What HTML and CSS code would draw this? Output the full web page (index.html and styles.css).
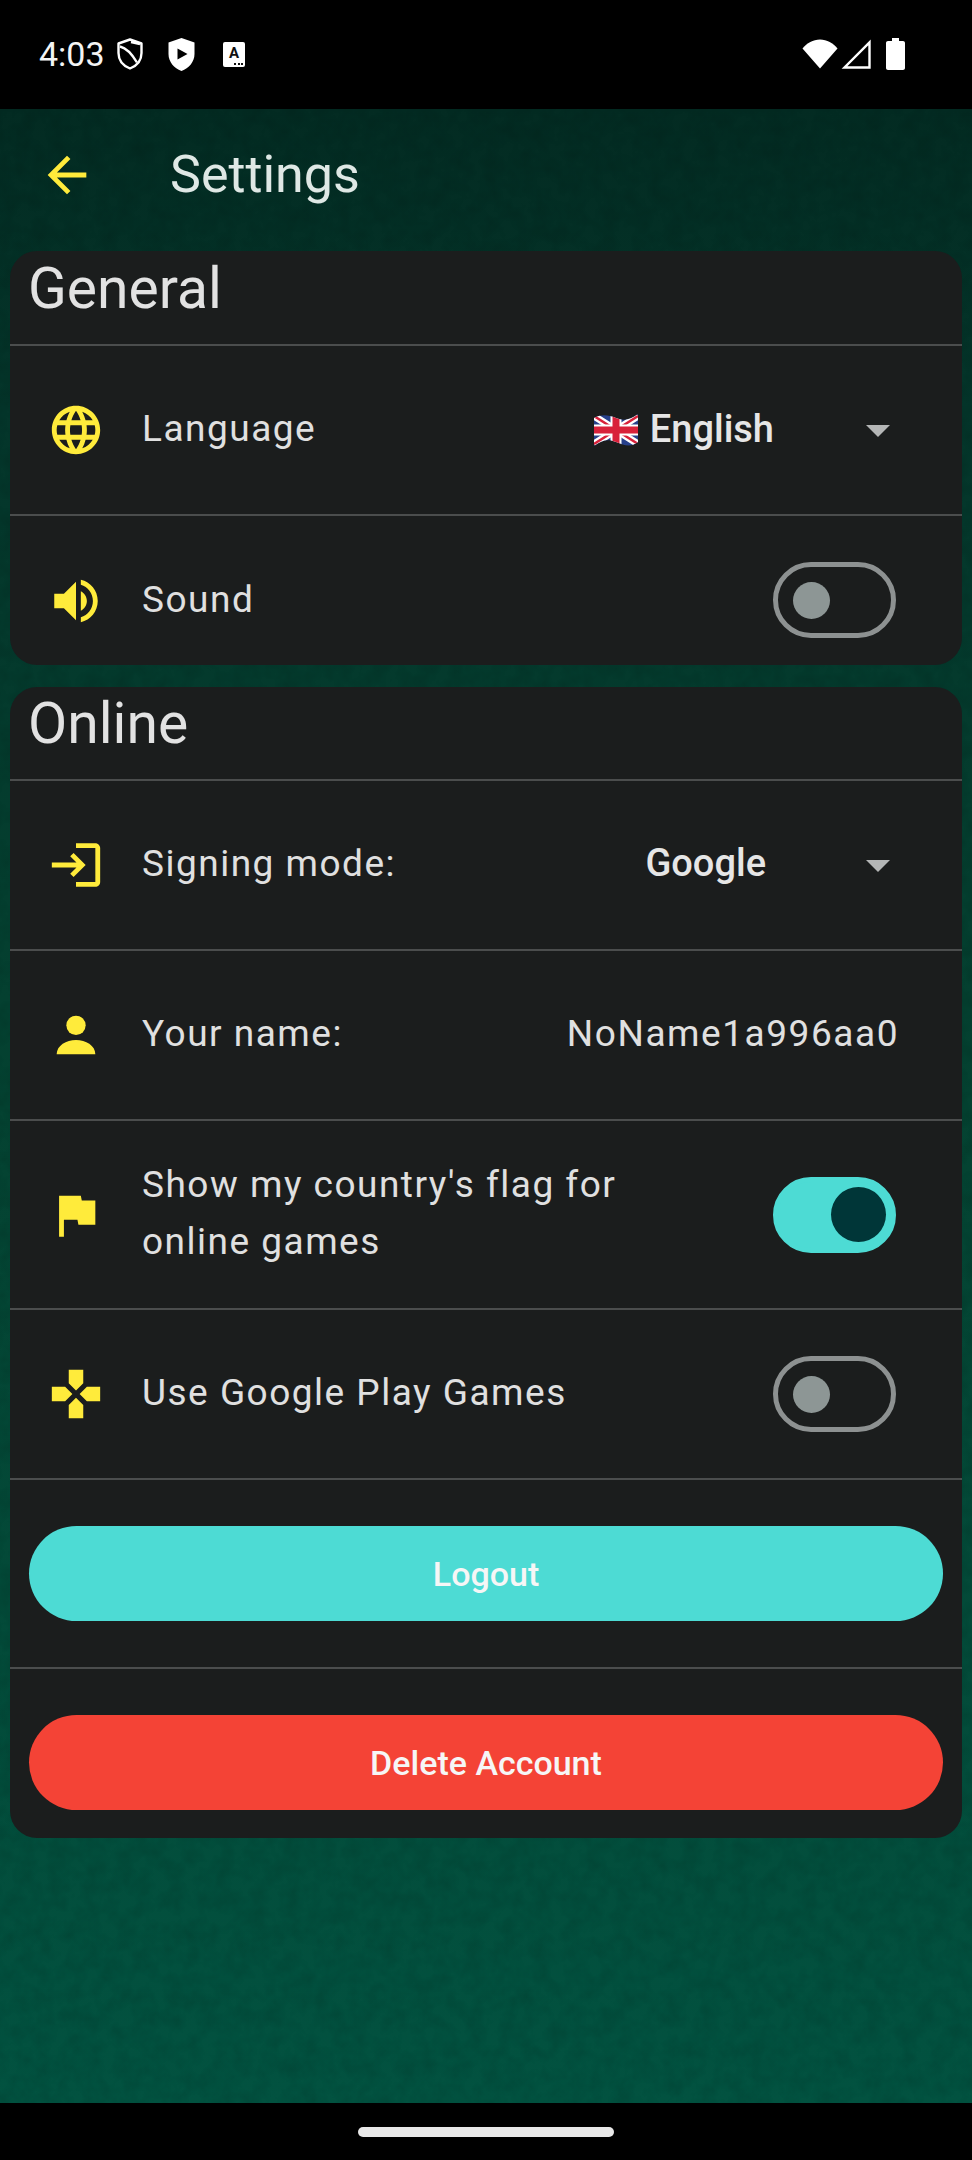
FILE: index.html
```html
<!DOCTYPE html>
<html lang="en">
<head>
<meta charset="utf-8">
<title>Settings</title>
<link rel="stylesheet" href="styles.css">
</head>
<body>
<div class="screen">
  <header class="statusbar">
    <div class="status-left">
      <span class="clock">4:03</span>
      <svg class="st-shield" viewBox="0 0 26 32"><path d="M13 1.500 24.500 5.500V15c0 7.500-4.800 12.800-11.500 15.500C6.300 27.800 1.500 22.500 1.500 15V5.500Z" fill="none" stroke="#fff" stroke-width="2.400" stroke-linejoin="round"/><path d="M3 8.500C9 10 15 16 20 24.500M23 6 14 4" fill="none" stroke="#fff" stroke-width="2.400"/></svg>
      <svg class="st-play" viewBox="0 0 27 33"><path fill-rule="evenodd" fill="#fff" d="M13.500 0 26.500 4.500V16c0 8-5.500 14-13 17C6 30 .5 24 .5 16V4.500ZM9.500 10.500V21.500L19.500 16Z"/></svg>
      <span class="st-tile"><span class="st-tile-a">A</span><span class="st-tile-dots"></span></span>
    </div>
    <div class="status-right">
      <svg class="st-wifi" viewBox="0 0 36 30"><path fill="#fff" d="M18 29.500 .5 9.500C5 4 11 .5 18 .5S31 4 35.500 9.500Z"/></svg>
      <svg class="st-signal" viewBox="0 0 30 30"><path d="M28.500 3.500V28.500H3.500Z" fill="none" stroke="#fff" stroke-width="2.400"/></svg>
      <svg class="st-battery" viewBox="0 0 19 32"><path fill="#fff" d="M6 0h7v3h4c1.100 0 2 .9 2 2v25c0 1.100-.9 2-2 2H2c-1.100 0-2-.9-2-2V5c0-1.100.9-2 2-2h4Z"/></svg>
    </div>
  </header>

  <main class="content">
    <div class="appbar">
      <svg class="icon" viewBox="0 0 24 24"><path d="M20 11H7.830l5.590-5.590L12 4l-8 8 8 8 1.410-1.410L7.830 13H20v-2z"/></svg>
      <h1 class="appbar-title">Settings</h1>
    </div>

    <section class="card">
      <h2 class="card-title card-title-general">General</h2>
      <div class="row">
        <svg class="icon" viewBox="0 0 24 24"><path d="M11.990 2C6.470 2 2 6.480 2 12s4.470 10 9.990 10C17.520 22 22 17.520 22 12S17.520 2 11.990 2zm6.930 6h-2.950c-.32-1.250-.78-2.450-1.380-3.560 1.840.63 3.370 1.910 4.330 3.560zM12 4.040c.83 1.200 1.480 2.530 1.910 3.960h-3.820c.43-1.430 1.080-2.760 1.910-3.960zM4.260 14C4.100 13.360 4 12.690 4 12s.1-1.360.26-2h3.380c-.08.66-.14 1.320-.14 2 0 .68.06 1.340.14 2H4.260zm.82 2h2.950c.32 1.250.78 2.450 1.380 3.560-1.840-.63-3.370-1.900-4.330-3.560zm2.950-8H5.080c.96-1.660 2.490-2.930 4.330-3.560C8.810 5.550 8.350 6.750 8.030 8zM12 19.960c-.83-1.200-1.480-2.530-1.910-3.960h3.820c-.43 1.430-1.080 2.760-1.910 3.960zM14.340 14H9.660c-.09-.66-.16-1.320-.16-2 0-.68.07-1.350.16-2h4.680c.09.65.16 1.320.16 2 0 .68-.07 1.340-.16 2zm.25 5.560c.6-1.110 1.060-2.310 1.380-3.560h2.950c-.96 1.650-2.490 2.930-4.330 3.560zM16.360 14c.08-.66.14-1.320.14-2 0-.68-.06-1.340-.14-2h3.380c.16.64.26 1.310.26 2s-.1 1.360-.26 2h-3.380z"/></svg>
        <span class="label">Language</span>
        <div class="select select-language">
          <svg class="flag" viewBox="0 0 44 32">
            <defs><clipPath id="flag-wave"><path d="M0 4C8 0 14 1 22 4S36 6 44 0V28C36 34 30 31 22 28S8 26 0 32Z"/></clipPath></defs>
            <g clip-path="url(#flag-wave)">
              <rect width="44" height="32" fill="#27408b"/>
              <path d="M0 2 44 30M44 2 0 30" stroke="#fff" stroke-width="7"/>
              <path d="M0 2 44 30M44 2 0 30" stroke="#d8213a" stroke-width="2.400"/>
              <path d="M22 0V32M0 16H44" stroke="#fff" stroke-width="11"/>
              <path d="M22 0V32M0 16H44" stroke="#d8213a" stroke-width="7"/>
            </g>
          </svg>
          <span class="select-value">English</span>
          <span class="caret"></span>
        </div>
      </div>
      <div class="row row-end">
        <svg class="icon" viewBox="0 0 24 24"><path d="M3 9v6h4l5 5V4L7 9H3zm13.500 3c0-1.770-1.020-3.290-2.500-4.030v8.050c1.480-.73 2.500-2.250 2.500-4.020zM14 3.230v2.060c2.890.86 5 3.540 5 6.710s-2.110 5.850-5 6.710v2.060c4.010-.91 7-4.490 7-8.770s-2.990-7.860-7-8.770z"/></svg>
        <span class="label">Sound</span>
        <span class="switch"><span class="knob"></span></span>
      </div>
    </section>

    <section class="card">
      <h2 class="card-title">Online</h2>
      <div class="row">
        <svg class="icon" viewBox="0 0 24 24"><path d="M11 7 9.600 8.400l2.600 2.600H2v2h10.200l-2.600 2.600L11 17l5-5-5-5zm9 12h-8v2h8c1.100 0 2-.9 2-2V5c0-1.100-.9-2-2-2h-8v2h8v14z"/></svg>
        <span class="label">Signing mode:</span>
        <div class="select select-signing">
          <span class="select-value">Google</span>
          <span class="caret"></span>
        </div>
      </div>
      <div class="row">
        <svg class="icon" viewBox="0 0 24 24"><circle cx="12" cy="8" r="4"/><path d="M4 20c0-3.600 4-5.900 8-5.900s8 2.300 8 5.900z"/></svg>
        <span class="label">Your name:</span>
        <span class="name-value">NoName1a996aa0</span>
      </div>
      <div class="row row-tall">
        <svg class="icon" viewBox="0 0 24 24"><path d="M14.400 6 14 4H5v17h2v-7h5.600l.4 2h7V6z"/></svg>
        <span class="label label-wrap">Show my country's flag for online games</span>
        <span class="switch switch-on"><span class="knob"></span></span>
      </div>
      <div class="row">
        <svg class="icon" viewBox="0 0 24 24"><path d="M15 7.500V2H9v5.500l3 3 3-3zM7.500 9H2v6h5.500l3-3-3-3zM9 16.500V22h6v-5.500l-3-3-3 3zM16.500 9l-3 3 3 3H22V9h-5.500z"/></svg>
        <span class="label">Use Google Play Games</span>
        <span class="switch"><span class="knob"></span></span>
      </div>
      <div class="action action-logout">
        <button class="btn btn-teal" type="button">Logout</button>
      </div>
      <div class="action action-delete">
        <button class="btn btn-red" type="button">Delete Account</button>
      </div>
    </section>
  </main>

  <footer class="navbar"><span class="handle"></span></footer>
</div>
</body>
</html>
```

FILE: styles.css
```css
* { box-sizing: border-box; }

html, body { margin: 0; padding: 0; background: #000; }

body {
  width: 972px;
  height: 2160px;
  overflow: hidden;
  font-family: Roboto, "Liberation Sans", sans-serif;
}

.screen {
  display: flex;
  flex-direction: column;
  width: 972px;
  height: 2160px;
}

/* Status bar */
.statusbar {
  flex: 0 0 109px;
  display: flex;
  justify-content: space-between;
  align-items: flex-start;
  padding: 38px 67px 0 39px;
  background: #000;
  color: #fff;
}

.status-left, .status-right { display: flex; align-items: flex-start; }

.clock {
  width: 62px;
  font-size: 34px;
  line-height: 32px;
  color: #f4f4f4;
}

.st-shield { width: 26px; height: 32px; margin-left: 16px; }
.st-play { width: 27px; height: 33px; margin-left: 25px; }

.st-tile {
  position: relative;
  display: flex;
  justify-content: center;
  width: 22px;
  height: 25px;
  margin: 4px 0 0 28px;
  background: #fff;
  border-radius: 2px;
}

.st-tile-a {
  font-size: 15px;
  line-height: 18px;
  margin-top: 2px;
  font-weight: 700;
  color: #111;
}

.st-tile-dots {
  position: absolute;
  right: 2px;
  bottom: 2px;
  width: 9px;
  height: 2px;
  background: repeating-linear-gradient(90deg, #111 0 2px, transparent 2px 3.500px);
}

.st-wifi { width: 36px; height: 30px; margin-top: 1px; }
.st-signal { width: 30px; height: 30px; margin: 1px 0 0 3px; }
.st-battery { width: 19px; height: 32px; margin-left: 15px; }

/* Main */
.content {
  flex: 1 1 auto;
  display: flex;
  flex-direction: column;
  padding: 0 10px;
  background-color: #033a2d;
  background-image: url("data:image/svg+xml,%3Csvg xmlns='http://www.w3.org/2000/svg' width='972' height='1994'%3E%3Cfilter id='n'%3E%3CfeTurbulence type='fractalNoise' baseFrequency='0.06' numOctaves='3'/%3E%3CfeColorMatrix values='0 0 0 0 0 0 0 0 0 0 0 0 0 0 0 0 0 0 0.9 -0.32'/%3E%3C/filter%3E%3Crect width='972' height='1994' filter='url(%23n)' opacity='.2'/%3E%3C/svg%3E"),
    linear-gradient(180deg, #032b22 0%, #04352a 15%, #044231 50%, #025240 100%);
}

.icon {
  flex: 0 0 58px;
  width: 58px;
  height: 58px;
  fill: #ffeb3b;
}

.appbar {
  flex: 0 0 142px;
  display: flex;
  align-items: center;
  margin-left: -3px;
  padding-left: 31px;
  padding-bottom: 11px;
}

.appbar-title {
  margin: 0 0 0 74px;
  font-size: 52px;
  font-weight: 400;
  line-height: 56px;
  color: #dfe8e5;
}

.card {
  display: flex;
  flex-direction: column;
  margin-bottom: 22px;
  background: #1b1d1d;
  border-radius: 27px;
  overflow: hidden;
}

.card-title {
  flex: 0 0 94px;
  margin: 0;
  padding: 6px 0 0 18px;
  font-size: 57px;
  line-height: 62px;
  font-weight: 400;
  color: #e2e2e2;
  border-bottom: 2px solid #4b4d4d;
}

.card-title-general { flex-basis: 95px; padding-top: 7px; }

.row {
  flex: 0 0 170px;
  display: flex;
  align-items: center;
  padding: 0 66px 0 37px;
  border-bottom: 2px solid #4b4d4d;
}

.row-end {
  flex: 0 0 149px;
  padding-top: 46px;
  padding-bottom: 0;
  align-items: flex-start;
  border-bottom: 0;
}

.row-end .icon { margin-top: 10px; }
.row-end .label { margin-top: 9px; }

.row-tall { flex-basis: 189px; }

.label {
  margin: 0 0 3px 37px;
  font-size: 37px;
  line-height: 57px;
  letter-spacing: 1.500px;
  color: #e0e0e0;
}

.label-wrap { width: 520px; }

.select {
  display: flex;
  align-items: center;
  margin-left: auto;
  margin-right: 6px;
}

.select-value {
  margin-bottom: 3px;
  font-size: 38px;
  line-height: 57px;
  font-weight: 500;
  color: #e6e6e6;
}

.select-language .select-value { margin-bottom: 1px; }

.flag { width: 44px; height: 32px; margin-right: 12px; }

.caret {
  width: 0;
  height: 0;
  margin: 2px 0 0 92px;
  border-left: 12.500px solid transparent;
  border-right: 12.500px solid transparent;
  border-top: 12.500px solid #b4b6b6;
}

.select-signing .caret { margin-left: 100px; }

.name-value {
  margin: 0 -3px 3px auto;
  font-size: 37px;
  line-height: 57px;
  letter-spacing: 1.550px;
  color: #e0e0e0;
}

.switch {
  flex: 0 0 123px;
  display: flex;
  align-items: center;
  width: 123px;
  height: 76px;
  margin-left: auto;
  padding-left: 15px;
  border: 5px solid #8d9191;
  border-radius: 38px;
}

.knob {
  width: 37px;
  height: 37px;
  border-radius: 50%;
  background: #8d9695;
}

.switch-on {
  justify-content: flex-end;
  padding: 0 5px 0 0;
  background: #4ddbd4;
  border-color: #4ddbd4;
}

.switch-on .knob {
  width: 55px;
  height: 55px;
  background: #003638;
}

.action { display: flex; }

.action-logout { flex: 0 0 189px; padding: 46px 19px 46px; border-bottom: 2px solid #4b4d4d; }
.action-delete { flex: 0 0 169px; padding: 46px 19px 28px; }

.btn {
  flex: 1;
  height: 95px;
  border: 0;
  border-radius: 48px;
  padding: 0;
  font-family: inherit;
  font-size: 34px;
  font-weight: 500;
  color: #f6f6f6;
}

.btn-teal { background: #4ddbd4; }
.btn-red { background: #f44336; }

/* Nav bar */
.navbar {
  flex: 0 0 57px;
  display: flex;
  justify-content: center;
  padding-top: 24px;
  background: #000;
}

.handle {
  width: 256px;
  height: 10px;
  border-radius: 5px;
  background: #e8e8e8;
}
```
